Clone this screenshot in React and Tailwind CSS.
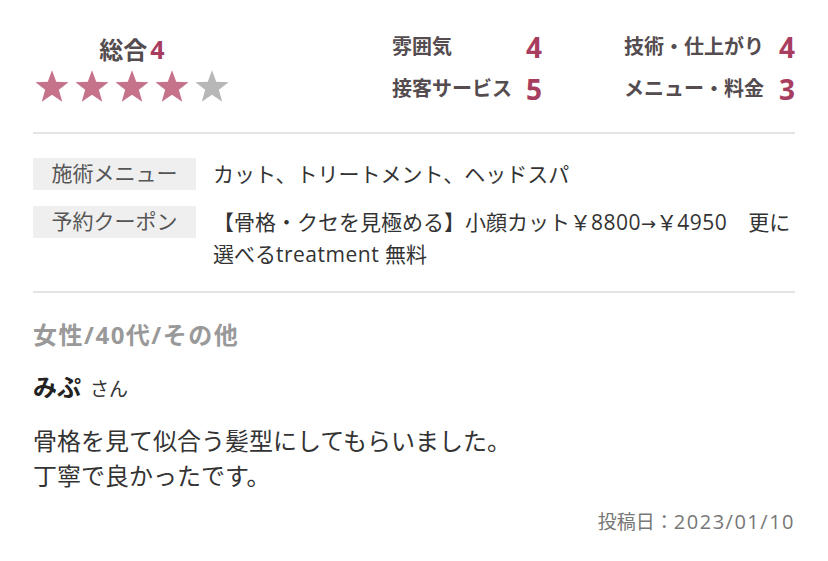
const FONT = { fontFamily: '"Open Sans", "Liberation Sans", "Noto Sans CJK JP", sans-serif' }
const ARROW = { fontFamily: '"DejaVu Sans", sans-serif' }

const SCORES = [
  { label: '雰囲気', value: 4 },
  { label: '技術・仕上がり', value: 4 },
  { label: '接客サービス', value: 5 },
  { label: 'メニュー・料金', value: 3 },
]

function starPoints() {
  const cx = 17
  const cy = 17.6
  const outer = 17.4
  const inner = 7.2
  const pts = []
  for (let i = 0; i < 10; i++) {
    const r = i % 2 === 0 ? outer : inner
    const a = -Math.PI / 2 + (i * Math.PI) / 5
    pts.push(`${(cx + r * Math.cos(a)).toFixed(2)},${(cy + r * Math.sin(a)).toFixed(2)}`)
  }
  return pts.join(' ')
}

function Star({ filled }) {
  return (
    <svg width="34" height="32" viewBox="0 0 34 32">
      <polygon points={starPoints()} fill={filled ? '#c7728b' : '#b7b7b7'} />
    </svg>
  )
}

function ScoreCell({ label, value }) {
  return (
    <div className="flex h-[42px] items-center justify-between">
      <span className="text-[20px] font-bold text-[#544c4f]">{label}</span>
      <span className="text-[28px] font-bold leading-none text-[#a83d5f]">{value}</span>
    </div>
  )
}

function InfoRow({ label, children }) {
  return (
    <div className="flex items-start">
      <div className="flex h-[32px] w-[163px] shrink-0 items-center justify-center bg-[#efefef] text-[21px] text-[#555]">
        {label}
      </div>
      <div className="ml-[17px] text-[21px] leading-[32px] text-[#333]">{children}</div>
    </div>
  )
}

export default function App() {
  return (
    <div className="min-h-[561px] w-[828px] bg-white px-[33px]" style={FONT}>
      <div className="flex pb-[22px] pt-[26px]">
        <div className="ml-[2px] mt-[6px] flex w-[194px] flex-col items-center">
          <div className="flex h-[36px] items-center font-bold">
            <span className="text-[24px] text-[#544c4f]">総合</span>
            <span className="ml-[3px] text-[25px] text-[#a83d5f]">4</span>
          </div>
          <div className="mt-[2px] flex gap-[6px]">
            {[1, 2, 3, 4, 5].map((n) => (
              <Star key={n} filled={n <= 4} />
            ))}
          </div>
        </div>
        <div className="ml-auto grid grid-cols-[150px_171px] gap-x-[82px]">
          {SCORES.map((s) => (
            <ScoreCell key={s.label} label={s.label} value={s.value} />
          ))}
        </div>
      </div>

      <div className="h-[2px] bg-[#e4e4e4]" />

      <div className="flex flex-col gap-[16px] pb-[21px] pt-[24px]">
        <InfoRow label="施術メニュー">カット、トリートメント、ヘッドスパ</InfoRow>
        <InfoRow label="予約クーポン">
          【骨格・クセを見極める】小顔カット￥<span className="tracking-[0.5px]">8800</span>
          <span style={ARROW} className="text-[18px] leading-[0]">→</span>￥<span className="tracking-[0.5px]">4950</span>　更に
          <br />
          選べる<span className="tracking-[0.5px]">treatment </span>無料
        </InfoRow>
      </div>

      <div className="h-[2px] bg-[#e4e4e4]" />

      <div className="pt-[26px]">
        <p className="text-[24px] font-bold leading-[32px] tracking-[1.5px] text-[#999]">女性/40代/その他</p>
        <p className="mt-[20px] leading-[32px] text-[#222]">
          <span className="text-[24px] font-bold">みぷ</span>
          <span className="ml-[9px] text-[19px] text-[#333]">さん</span>
        </p>
        <p className="mt-[17px] text-[24px] leading-[35px] text-[#333]">
          骨格を見て似合う髪型にしてもらいました。
          <br />
          丁寧で良かったです。
        </p>
        <p className="mt-[15px] text-right text-[19px] leading-[28px] text-[#777]">
          投稿日：<span className="text-[20px] tracking-[1.5px]">2023/01/10</span>
        </p>
      </div>
    </div>
  )
}
